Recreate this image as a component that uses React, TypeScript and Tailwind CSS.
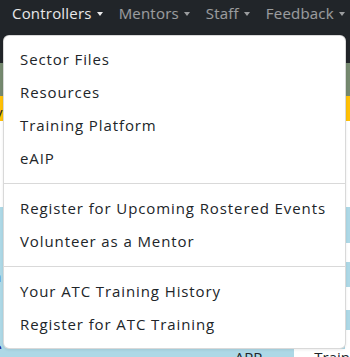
import React from 'react';

const navItems = [
  { label: 'Controllers', active: true },
  { label: 'Mentors', active: false },
  { label: 'Staff', active: false },
  { label: 'Feedback', active: false },
];

const groups = [
  ['Sector Files', 'Resources', 'Training Platform', 'eAIP'],
  ['Register for Upcoming Rostered Events', 'Volunteer as a Mentor'],
  ['Your ATC Training History', 'Register for ATC Training'],
];

function Caret() {
  return (
    <span className="ml-[5px] inline-block h-0 w-0 border-x-[3.5px] border-t-[4px] border-x-transparent border-t-current align-[3px]" />
  );
}

export default function App() {
  return (
    <div className="relative h-[357px] w-[350px] overflow-hidden bg-white font-['Open_Sans',sans-serif] text-[15px]">
      {/* page behind the menu */}
      <nav className="h-[63px] bg-[#212529]">
        <ul className="flex items-center gap-[16px] pl-[12px] pt-[3px] leading-[20px] tracking-[0.2px]">
          {navItems.map((item) => (
            <li
              key={item.label}
              className={item.active ? 'text-white/90' : 'text-white/55'}
            >
              {item.label}
              <Caret />
            </li>
          ))}
        </ul>
      </nav>
      <div className="h-[33px] bg-[#75896f]" />
      <div className="flex h-[25px] items-end bg-[#ffc107] text-[#212529]">
        <span className="-ml-[5px] leading-[18px]">v</span>
      </div>
      <div className="h-[86px] bg-white" />
      <div className="flex h-[142px]">
        <div className="flex flex-1 flex-col bg-[#add8e6] text-[#1a1a8c]">
          <span className="-ml-[7px] mt-[58px]">a</span>
          <span className="-ml-[7px] mt-[48px]">o</span>
        </div>
        <div className="flex w-[5px] flex-col text-[#212529]">
          <div className="h-[36px] bg-[#add8e6]" />
          <div className="h-[19px]" />
          <div className="h-[25px] bg-[#add8e6]" />
          <div className="h-[23px]" />
          <div className="h-[20px] bg-[#add8e6]" />
        </div>
      </div>
      <div className="flex h-[12px] leading-[16px] text-[#212529]">
        <div className="flex w-[295px] justify-end bg-[#add8e6] pr-[32px]">APP</div>
        <div className="flex-1 pl-[20px]">Train</div>
      </div>

      {/* open dropdown */}
      <div className="absolute left-[3px] top-[35px] w-[343px] rounded-[6px] border border-black/15 bg-white py-[7px] text-[#212529] shadow-[0_1px_3px_rgba(0,0,0,0.08)]">
        {groups.map((group, gi) => (
          <div key={gi}>
            {gi > 0 && <div className="my-[8px] h-px bg-black/15" />}
            {group.map((label) => (
              <div key={label} className="flex h-[33px] items-center whitespace-nowrap px-[16px] tracking-[0.9px]">
                {label}
              </div>
            ))}
          </div>
        ))}
      </div>
    </div>
  );
}
